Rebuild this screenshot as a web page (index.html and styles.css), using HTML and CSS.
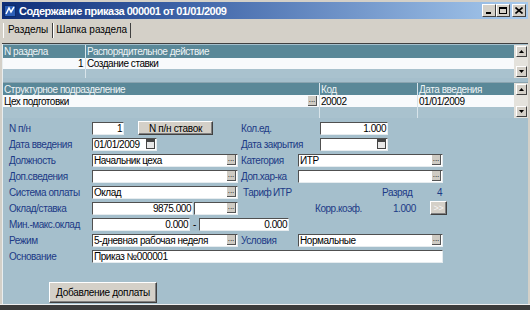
FILE: index.html
```html
<!DOCTYPE html>
<html lang="ru">
<head>
    <meta charset="UTF-8">
    <title>Содержание приказа</title>
    <link rel="stylesheet" href="styles.css">
</head>
<body>
    <div class="window">
        <div class="titlebar">
            <svg class="app-icon" width="12" height="12" viewBox="0 0 12 12">
                <rect x="0.5" y="0.5" width="11" height="11" fill="#2c5fb8" stroke="#0c2c6c"/>
                <path d="M2 9 L5 3 L7 7 L10 2" stroke="#fff" stroke-width="1.5" fill="none"/>
            </svg>
            <span class="title">Содержание приказа 000001 от 01/01/2009</span>
            <div class="caption-buttons">
                <span class="cap-btn"><svg width="8" height="7" viewBox="0 0 8 7"><rect x="1" y="5" width="5" height="2" fill="#000"/></svg></span>
                <span class="cap-btn"><svg width="8" height="7" viewBox="0 0 8 7"><rect x="0.5" y="0.5" width="7" height="6" fill="none" stroke="#000"/><rect x="0" y="0" width="8" height="2" fill="#000"/></svg></span>
                <span class="cap-btn close"><svg width="8" height="7" viewBox="0 0 8 7"><path d="M0.5 0.5 L7.5 6.5 M7.5 0.5 L0.5 6.5" stroke="#000" stroke-width="1.6"/></svg></span>
            </div>
        </div>

        <div class="tabs">
            <div class="tab">Разделы</div>
            <div class="tab active">Шапка раздела</div>
        </div>

        <div class="content">
            <!-- разделы приказа -->
            <div class="grid">
                <div class="grid-main">
                    <div class="grid-row head h1">
                        <div class="cell col-num">N раздела</div>
                        <div class="cell col-fill">Распорядительное действие</div>
                    </div>
                    <div class="grid-row data d1">
                        <div class="cell col-num right">1</div>
                        <div class="cell col-fill">Создание ставки</div>
                    </div>
                    <div class="grid-row empty e1">
                        <div class="cell col-num"></div>
                        <div class="cell col-fill"></div>
                    </div>
                </div>
                <div class="scroll">
                    <span class="arrow"><svg width="5" height="3" viewBox="0 0 5 3"><path d="M2.5 0 L5 3 L0 3 Z" fill="#000"/></svg></span>
                    <span class="arrow"><svg width="5" height="3" viewBox="0 0 5 3"><path d="M0 0 L5 0 L2.5 3 Z" fill="#000"/></svg></span>
                </div>
            </div>

            <div class="splitter"></div>

            <!-- подразделение -->
            <div class="grid">
                <div class="grid-main">
                    <div class="grid-row head h2">
                        <div class="cell col-dept">Структурное подразделение</div>
                        <div class="cell col-code">Код</div>
                        <div class="cell col-fill">Дата введения</div>
                    </div>
                    <div class="grid-row data d2">
                        <div class="cell col-dept with-btn"><span>Цех подготовки</span><span class="dots">...</span></div>
                        <div class="cell col-code">20002</div>
                        <div class="cell col-fill">01/01/2009</div>
                    </div>
                    <div class="grid-row empty e2">
                        <div class="cell col-dept"></div>
                        <div class="cell col-code"></div>
                        <div class="cell col-fill"></div>
                    </div>
                </div>
                <div class="scroll tall">
                    <span class="arrow"><svg width="5" height="3" viewBox="0 0 5 3"><path d="M2.5 0 L5 3 L0 3 Z" fill="#000"/></svg></span>
                    <span class="arrow"><svg width="5" height="3" viewBox="0 0 5 3"><path d="M0 0 L5 0 L2.5 3 Z" fill="#000"/></svg></span>
                </div>
            </div>

            <!-- шапка раздела -->
            <div class="form">
                <div class="row">
                    <label class="lbl">N п/н</label>
                    <div class="field num w-num"><span class="val">1</span></div>
                    <button class="btn btn-rates">N п/н ставок</button>
                    <label class="lbl-r">Кол.ед.</label>
                    <div class="field num w-small"><span class="val">1.000</span></div>
                </div>
                <div class="row">
                    <label class="lbl">Дата введения</label>
                    <div class="field w-date"><span class="val">01/01/2009</span><span class="cal"></span></div>
                    <label class="lbl-r gap-date">Дата закрытия</label>
                    <div class="field w-small"><span class="val"></span><span class="cal"></span></div>
                </div>
                <div class="row">
                    <label class="lbl">Должность</label>
                    <div class="field w-wide"><span class="val">Начальник цеха</span><span class="dots">...</span></div>
                    <label class="lbl-r short">Категория</label>
                    <div class="field w-right"><span class="val">ИТР</span><span class="dots">...</span></div>
                </div>
                <div class="row">
                    <label class="lbl">Доп.сведения</label>
                    <div class="field w-wide"><span class="val"></span><span class="dots">...</span></div>
                    <label class="lbl-r short">Доп.хар-ка</label>
                    <div class="field w-right"><span class="val"></span><span class="dots">...</span></div>
                </div>
                <div class="row">
                    <label class="lbl">Система оплаты</label>
                    <div class="field w-wide"><span class="val">Оклад</span><span class="dots">...</span></div>
                    <span class="tariff">Тариф</span>
                    <span class="tariff-val">ИТР</span>
                    <span class="grade">Разряд</span>
                    <span class="grade-val">4</span>
                </div>
                <div class="row">
                    <label class="lbl">Оклад/ставка</label>
                    <div class="field num w-salary"><span class="val">9875.000</span></div>
                    <div class="field w-unit"><span class="val"></span><span class="dots">...</span></div>
                    <span class="coef">Корр.коэф.</span>
                    <span class="coef-val">1.000</span>
                    <button class="btn btn-next" disabled>&gt;&gt;</button>
                </div>
                <div class="row">
                    <label class="lbl">Мин.-макс.оклад</label>
                    <div class="field num w-min"><span class="val">0.000</span></div>
                    <span class="dash">-</span>
                    <div class="field num w-max"><span class="val">0.000</span></div>
                </div>
                <div class="row">
                    <label class="lbl">Режим</label>
                    <div class="field w-wide"><span class="val">5-дневная рабочая неделя</span><span class="dots">...</span></div>
                    <label class="lbl-r short">Условия</label>
                    <div class="field w-right"><span class="val">Нормальные</span><span class="dots">...</span></div>
                </div>
                <div class="row">
                    <label class="lbl">Основание</label>
                    <div class="field w-full"><span class="val">Приказ №000001</span></div>
                </div>

                <button class="btn btn-add">Добавление доплаты</button>
            </div>
        </div>
        <div class="bottom-edge"></div>
    </div>
</body>
</html>
```

FILE: styles.css
```css
/* окно приказа */

body {
    margin: 0;
    padding: 0;
    background-color: #3c3c3c;
}

.window {
    width: 530px;
    height: 310px;
    box-sizing: border-box;
    padding: 2px 2px 0 2px;
    background-color: #d4d0c8;
    display: flex;
    flex-direction: column;
    font-family: "Liberation Sans", Arial, sans-serif;
    font-size: 10px;
    color: #000;
    overflow: hidden;
}

/* заголовок */

.titlebar {
    height: 17px;
    flex-shrink: 0;
    display: flex;
    align-items: center;
    padding: 0 2px;
    background: linear-gradient(to right, #0e2e78, #3f64a8 35%, #a8cbee);
}

.app-icon {
    flex-shrink: 0;
    margin-right: 3px;
}

.title {
    color: #fff;
    font-weight: bold;
    font-size: 11px;
    letter-spacing: -0.5px;
    flex: 1;
    white-space: nowrap;
}

.caption-buttons {
    display: flex;
}

.cap-btn {
    width: 12px;
    height: 11px;
    background-color: #d4d0c8;
    border: 1px solid;
    border-color: #fff #404040 #404040 #fff;
    display: flex;
    align-items: center;
    justify-content: center;
}

.cap-btn.close {
    margin-left: 2px;
}

/* вкладки */

.tabs {
    height: 19px;
    flex-shrink: 0;
    display: flex;
    align-items: flex-end;
    padding: 0 1px 5px;
    border-bottom: 1px solid #404040;
}

.tab {
    height: 15px;
    line-height: 13px;
    padding: 0 4px 0 4px;
    border-right: 1px solid #404040;
    border-left: 1px solid #fff;
}

.tab.active {
    padding: 0 3px 0 2px;
}

/* область содержимого */

.content {
    flex: 1;
    display: flex;
    flex-direction: column;
    background-color: #a5bfcc;
    border-left: 1px solid #e8eef0;
    padding-top: 1px;
    letter-spacing: -0.45px;
}

.grid {
    display: flex;
}

.grid-main {
    flex: 1;
    display: flex;
    flex-direction: column;
}

.grid-row {
    display: flex;
}

.cell {
    box-sizing: border-box;
    padding: 0 2px 0 1px;
    white-space: nowrap;
    overflow: hidden;
    border-right: 1px solid #d8e4ea;
    display: flex;
    align-items: center;
}

.cell.right {
    justify-content: flex-end;
}

.col-num { width: 83px; }
.col-dept { width: 317px; }
.col-code { width: 98px; }
.col-fill { flex: 1; border-right: none; }

.grid-row.head {
    background-color: #5a8898;
    color: #eef4f6;
}

.grid-row.data {
    background-color: #f8fafc;
    color: #000;
}

.grid-row.empty {
    background-color: #a9c2ce;
}

.h1 { height: 13px; }
.d1 { height: 11px; }
.e1 { height: 9px; }

.h2 { height: 12px; }
.d2 { height: 12px; }
.e2 { height: 11px; }

.with-btn {
    justify-content: space-between;
    padding-right: 1px;
}

.scroll {
    width: 14px;
    display: flex;
    flex-direction: column;
    justify-content: space-between;
    align-items: center;
    background-color: #e4e2dc;
    padding: 1px 0;
    box-sizing: border-box;
}

.arrow {
    width: 9px;
    height: 9px;
    background-color: #d4d0c8;
    border: 1px solid;
    border-color: #fff #404040 #404040 #fff;
    display: flex;
    align-items: center;
    justify-content: center;
}

.splitter {
    height: 4px;
    border-bottom: 1px solid #8aa4b0;
}

/* форма */

.form {
    flex: 1;
    padding: 2px 0 0 6px;
    color: #1c3a86;
}

.row {
    height: 16px;
    display: flex;
    align-items: center;
    white-space: nowrap;
}

.row > span,
.row > label {
    flex-shrink: 0;
}

.lbl {
    width: 83px;
}

.lbl-r {
    width: 79px;
}

.field {
    height: 13px;
    box-sizing: border-box;
    background-color: #fff;
    border: 1px solid;
    border-color: #505050 #e6ecef #e6ecef #505050;
    display: flex;
    align-items: center;
    color: #000;
    flex-shrink: 0;
}

.field .val {
    flex: 1;
    padding: 0 1px;
    overflow: hidden;
}

.field.num .val {
    text-align: right;
}

.dots {
    width: 8px;
    height: 9px;
    flex-shrink: 0;
    margin-right: 1px;
    background-color: #cfcbc3;
    border-bottom: 1px solid #555;
    border-right: 1px solid #555;
    font-size: 8px;
    line-height: 7px;
    letter-spacing: 0;
    text-align: center;
    color: #000;
}

.cal {
    width: 7px;
    height: 8px;
    flex-shrink: 0;
    margin-right: 1px;
    border: 1px solid #444;
    background: linear-gradient(#444 0 2px, #e8e8e8 2px);
}

.w-num { width: 32px; }
.w-date { width: 65px; }
.w-small { width: 68px; }
.w-wide { width: 146px; }
.w-right { width: 145px; }
.w-salary { width: 101px; }
.w-unit { width: 44px; margin-left: 1px; }
.w-min { width: 98px; }
.w-max { width: 90px; }
.w-full { width: 351px; }

.btn-rates {
    margin: 0 28px 0 14px;
    width: 75px;
}

.gap-date {
    margin-left: 84px;
}

.short {
    width: 57px;
    margin-left: 3px;
}

.tariff {
    width: 30px;
    margin-left: 5px;
}

.tariff-val {
    width: 109px;
}

.grade {
    width: 55px;
}

.coef {
    width: 78px;
    margin-left: 77px;
}

.coef-val {
    width: 37px;
}

.dash {
    width: 9px;
    text-align: center;
    color: #000;
}

.btn {
    font-family: "Liberation Sans", Arial, sans-serif;
    font-size: 10px;
    letter-spacing: -0.3px;
    color: #000;
    background-color: #d4d0c8;
    border: 1px solid;
    border-color: #fff #404040 #404040 #fff;
    box-shadow: inset -1px -1px 0 #808080;
    padding: 0;
    height: 14px;
}

.btn-next {
    width: 17px;
    color: #f4f4f4;
    font-size: 9px;
}

.btn-add {
    display: block;
    width: 108px;
    height: 21px;
    margin: 18px 0 0 40px;
}

.bottom-edge {
    height: 5px;
    flex-shrink: 0;
    background-color: #3c3c3c;
    margin: 0 -2px;
    border-top: 1px solid #f0f0f0;
}
```
